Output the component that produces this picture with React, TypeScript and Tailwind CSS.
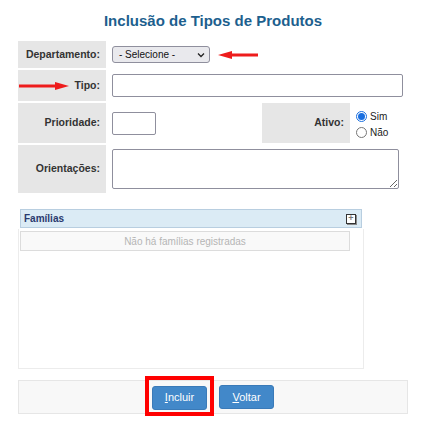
function Arrow({ dir, width }: { dir: "left" | "right"; width: number }) {
  const head = 14
  return (
    <svg width={width} height={10} viewBox={`0 0 ${width} 10`} className="block shrink-0">
      {dir === "left" ? (
        <>
          <rect x={head - 1} y={3.5} width={width - head + 1} height={3} fill="#ee1c1c" />
          <polygon points={`0,5 ${head},1 ${head},9`} fill="#ee1c1c" />
        </>
      ) : (
        <>
          <rect x={0} y={3.5} width={width - head + 1} height={3} fill="#ee1c1c" />
          <polygon points={`${width},5 ${width - head},1 ${width - head},9`} fill="#ee1c1c" />
        </>
      )}
    </svg>
  )
}

function Label({ children, className = "" }: { children: React.ReactNode; className?: string }) {
  return (
    <div
      className={`flex w-[88px] shrink-0 items-center justify-end bg-[#e6e6e6] pr-[6px] text-[10.5px] font-bold text-[#333] ${className}`}
    >
      {children}
    </div>
  )
}

function Radio({ checked, label }: { checked?: boolean; label: string }) {
  return (
    <div className="flex items-center gap-[3px] text-[10px] leading-[16px] text-[#222]">
      {checked ? (
        <span className="flex h-[11px] w-[11px] items-center justify-center rounded-full border border-[#1a6fe0] bg-white">
          <span className="h-[7px] w-[7px] rounded-full bg-[#1a6fe0]" />
        </span>
      ) : (
        <span className="h-[11px] w-[11px] rounded-full border border-[#767676] bg-white" />
      )}
      <span>{label}</span>
    </div>
  )
}

export default function App() {
  return (
    <div className="h-[423px] w-[422px] overflow-hidden bg-white font-['Liberation_Sans',Arial,sans-serif]">
      <div className="flex h-[41px] items-center justify-center pl-[4px] pt-[2px] text-[15px] font-bold text-[#1d5f8e]">
        Inclusão de Tipos de Produtos
      </div>

      <div className="ml-[18px] flex w-[390px] flex-col gap-[2px]">
        <div className="flex h-[27px]">
          <Label>Departamento:</Label>
          <div className="flex items-center pl-[6px]">
            <div className="flex h-[17px] w-[98px] items-center justify-between rounded-[3px] border border-[#8f8f9d] bg-[#e9e9ed] pl-[6px] pr-[4px] text-[10px] text-[#111]">
              <span>- Selecione -</span>
              <svg width="8" height="6" viewBox="0 0 8 6">
                <path d="M1 1.5 L4 4.5 L7 1.5" fill="none" stroke="#222" strokeWidth="1.3" />
              </svg>
            </div>
            <div className="ml-[8px]">
              <Arrow dir="left" width={40} />
            </div>
          </div>
        </div>

        <div className="flex h-[31px]">
          <Label className="gap-[6px]">
            <Arrow dir="right" width={50} />
            <span>Tipo:</span>
          </Label>
          <div className="flex items-center pl-[6px]">
            <input className="h-[23px] w-[291px] rounded-[2px] border border-[#8f8f9d] bg-white outline-none" />
          </div>
        </div>

        <div className="flex h-[40px]">
          <Label>Prioridade:</Label>
          <div className="flex w-[156px] items-center pl-[6px]">
            <input className="h-[23px] w-[44px] rounded-[2px] border border-[#8f8f9d] bg-white outline-none" />
          </div>
          <Label className="w-[87px]">Ativo:</Label>
          <div className="flex flex-col justify-center pl-[6px] pt-[3px]">
            <Radio checked label="Sim" />
            <Radio label="Não" />
          </div>
        </div>

        <div className="flex h-[48px]">
          <Label>Orientações:</Label>
          <div className="flex items-center pl-[6px]">
            <textarea className="h-[40px] w-[287px] rounded-[2px] border border-[#8f8f9d] bg-white outline-none" />
          </div>
        </div>
      </div>

      <div className="ml-[18px] mt-[16px] w-[346px]">
        <div className="ml-[2px] flex h-[19px] w-[342px] items-center justify-between border border-[#b8cee0] bg-[#dbebf5] pl-[3px] pr-[5px]">
          <span className="text-[10px] font-bold text-[#2a3a6e]">Famílias</span>
          <span className="flex h-[10px] w-[10px] items-center justify-center border border-[#333] bg-white shadow-[1px_1px_0_#888]">
            <span className="text-[9px] leading-none font-bold text-[#777]">+</span>
          </span>
        </div>
        <div className="mt-[1px] h-[140px] border border-t-0 border-[#ececec] pt-[2px]">
          <div className="ml-[1px] flex h-[20px] w-[330px] items-center justify-center border border-[#dcdcdc] bg-[#f9f9f9] text-[10px] text-[#b5b5b5]">
            Não há famílias registradas
          </div>
        </div>
      </div>

      <div className="ml-[18px] mt-[11px] flex h-[34px] w-[390px] items-center justify-center gap-[12px] border border-[#e6e6e6] bg-[#f8f8f8]">
        <div className="relative">
          <button className="h-[24px] w-[55px] rounded-[3px] border border-[#3a7ab8] bg-[#4288c9] text-[11px] text-white">
            <span className="underline">I</span>ncluir
          </button>
          <div className="pointer-events-none absolute -bottom-[6px] -left-[7px] -right-[7px] -top-[8px] border-[4px] border-[#ff0000]" />
        </div>
        <button className="h-[24px] w-[55px] rounded-[3px] border border-[#3a7ab8] bg-[#4288c9] text-[11px] text-white">
          <span className="underline">V</span>oltar
        </button>
      </div>
    </div>
  )
}
